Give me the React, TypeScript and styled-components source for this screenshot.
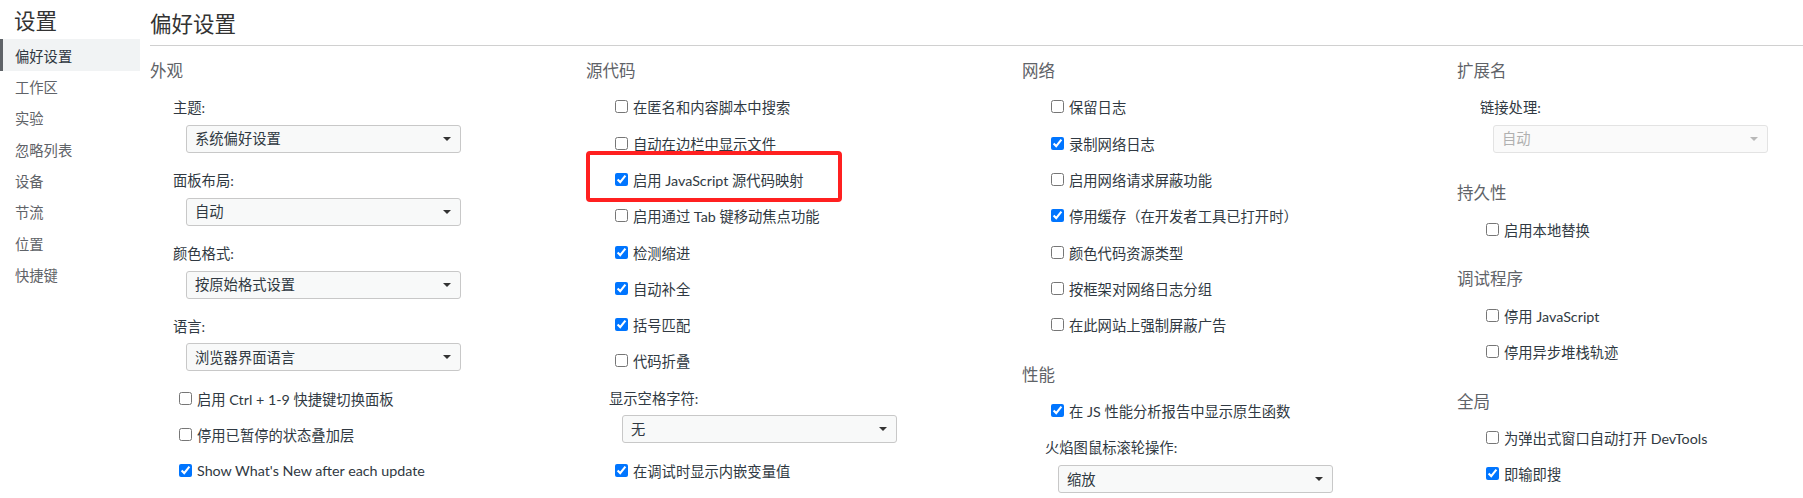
import React from "react";
import styled, { createGlobalStyle, css } from "styled-components";

const GlobalStyle = createGlobalStyle`
  html, body { margin: 0; padding: 0; background: #ffffff; }
  body {
    font-family: "Lato", "Noto Sans CJK SC", sans-serif;
    color: #303942;
    font-size: 14.3px;
  }
  * { box-sizing: border-box; }
`;

const Page = styled.div`
  display: flex;
  width: 1803px;
  height: 498px;
  overflow: hidden;
  background: #fff;
`;

const Sidebar = styled.nav`
  width: 140px;
  flex: none;
  display: flex;
  flex-direction: column;
`;

const SidebarTitle = styled.div`
  height: 39px;
  flex: none;
  padding-left: 14px;
  display: flex;
  align-items: center;
  font-size: 21.5px;
  color: #333;
  font-family: "Noto Sans CJK SC", sans-serif;
`;

const NavItem = styled.div<{ $active?: boolean }>`
  height: 31.3px;
  flex: none;
  display: flex;
  align-items: center;
  padding-left: 12px;
  font-size: 14.3px;
  color: #5f6368;
  font-family: "Noto Sans CJK SC", sans-serif;
  border-left: 3px solid transparent;
  ${(p) =>
    p.$active &&
    css`
      background: #f1f3f4;
      border-left-color: #5f6368;
      color: #303942;
      height: 32px;
    `}
`;

const Main = styled.main`
  flex: 1;
  padding-left: 10px;
  display: flex;
  flex-direction: column;
  min-height: 0;
`;

const Header = styled.div`
  height: 46px;
  flex: none;
  border-bottom: 1px solid #d0d0d0;
  display: flex;
  align-items: center;
  font-size: 21.5px;
  color: #333;
  font-family: "Noto Sans CJK SC", sans-serif;
  padding-bottom: 1px;
`;

const Columns = styled.div`
  flex: none;
  display: grid;
  grid-template-columns: 436px 436px 435px 1fr;
  padding-top: 5px;
`;

const Column = styled.div`
  position: relative;
  display: flex;
  flex-direction: column;
`;

const Section = styled.section`
  display: flex;
  flex-direction: column;
  & + & {
    margin-top: 12px;
  }
`;

const SectionTitle = styled.div`
  height: 37.7px;
  display: flex;
  align-items: center;
  font-size: 16.5px;
  color: #5f6368;
  font-family: "Noto Sans CJK SC", sans-serif;
`;

const FieldLabel = styled.div`
  height: 36.3px;
  flex: none;
  display: flex;
  align-items: center;
  padding-left: 23px;
  font-size: 14.3px;
  color: #303942;
`;

const CheckRow = styled.label`
  height: 36.3px;
  flex: none;
  display: flex;
  align-items: center;
  gap: 5px;
  padding-left: 29px;
  font-size: 14.3px;
  color: #303942;
  white-space: nowrap;
`;

const Box = styled.input.attrs({ type: "checkbox" })`
  width: 13px;
  height: 13px;
  margin: 0;
  flex: none;
  accent-color: #0075ff;
`;

const SelectWrap = styled.div<{ $disabled?: boolean }>`
  position: relative;
  flex: none;
  margin-left: 36px;
  margin-bottom: 8.5px;
  width: 275px;
  height: 28px;
  &::after {
    content: "";
    position: absolute;
    right: 10px;
    top: 12px;
    border-left: 4px solid transparent;
    border-right: 4px solid transparent;
    border-top: 4px solid ${(p) => (p.$disabled ? "#b8b8b8" : "#333")};
    pointer-events: none;
  }
`;

const Select = styled.select<{ $disabled?: boolean }>`
  appearance: none;
  -webkit-appearance: none;
  width: 100%;
  height: 100%;
  margin: 0;
  padding: 0 24px 0 8px;
  font: inherit;
  font-size: 14.3px;
  border-radius: 3px;
  border: 1px solid ${(p) => (p.$disabled ? "#e3e3e3" : "#c8c8c8")};
  background: ${(p) => (p.$disabled ? "#fafafa" : "#f8f9f9")};
  color: ${(p) => (p.$disabled ? "#b0b0b0" : "#303942")};
  opacity: 1;
`;

const Highlight = styled.div`
  position: absolute;
  left: 0;
  top: 100px;
  width: 256px;
  height: 51px;
  border: 4px solid #ff2020;
  border-radius: 4px;
  pointer-events: none;
`;

type Item =
  | { kind: "check"; text: string; checked?: boolean }
  | { kind: "select"; label: string; value: string; disabled?: boolean };

type SectionData = { title: string; items: Item[] };

const columns: SectionData[][] = [
  [
    {
      title: "外观",
      items: [
        { kind: "select", label: "主题:", value: "系统偏好设置" },
        { kind: "select", label: "面板布局:", value: "自动" },
        { kind: "select", label: "颜色格式:", value: "按原始格式设置" },
        { kind: "select", label: "语言:", value: "浏览器界面语言" },
        { kind: "check", text: "启用 Ctrl + 1-9 快捷键切换面板" },
        { kind: "check", text: "停用已暂停的状态叠加层" },
        { kind: "check", text: "Show What's New after each update", checked: true },
      ],
    },
  ],
  [
    {
      title: "源代码",
      items: [
        { kind: "check", text: "在匿名和内容脚本中搜索" },
        { kind: "check", text: "自动在边栏中显示文件" },
        { kind: "check", text: "启用 JavaScript 源代码映射", checked: true },
        { kind: "check", text: "启用通过 Tab 键移动焦点功能" },
        { kind: "check", text: "检测缩进", checked: true },
        { kind: "check", text: "自动补全", checked: true },
        { kind: "check", text: "括号匹配", checked: true },
        { kind: "check", text: "代码折叠" },
        { kind: "select", label: "显示空格字符:", value: "无" },
        { kind: "check", text: "在调试时显示内嵌变量值", checked: true },
      ],
    },
  ],
  [
    {
      title: "网络",
      items: [
        { kind: "check", text: "保留日志" },
        { kind: "check", text: "录制网络日志", checked: true },
        { kind: "check", text: "启用网络请求屏蔽功能" },
        { kind: "check", text: "停用缓存（在开发者工具已打开时）", checked: true },
        { kind: "check", text: "颜色代码资源类型" },
        { kind: "check", text: "按框架对网络日志分组" },
        { kind: "check", text: "在此网站上强制屏蔽广告" },
      ],
    },
    {
      title: "性能",
      items: [
        { kind: "check", text: "在 JS 性能分析报告中显示原生函数", checked: true },
        { kind: "select", label: "火焰图鼠标滚轮操作:", value: "缩放" },
      ],
    },
  ],
  [
    {
      title: "扩展名",
      items: [{ kind: "select", label: "链接处理:", value: "自动", disabled: true }],
    },
    { title: "持久性", items: [{ kind: "check", text: "启用本地替换" }] },
    {
      title: "调试程序",
      items: [
        { kind: "check", text: "停用 JavaScript" },
        { kind: "check", text: "停用异步堆栈轨迹" },
      ],
    },
    {
      title: "全局",
      items: [
        { kind: "check", text: "为弹出式窗口自动打开 DevTools" },
        { kind: "check", text: "即输即搜", checked: true },
      ],
    },
  ],
];

const navItems = ["偏好设置", "工作区", "实验", "忽略列表", "设备", "节流", "位置", "快捷键"];

function renderItem(item: Item, key: number) {
  if (item.kind === "check") {
    return (
      <CheckRow key={key}>
        <Box defaultChecked={!!item.checked} />
        <span>{item.text}</span>
      </CheckRow>
    );
  }
  return (
    <React.Fragment key={key}>
      <FieldLabel>{item.label}</FieldLabel>
      <SelectWrap $disabled={item.disabled}>
        <Select $disabled={item.disabled} disabled={item.disabled} defaultValue={item.value}>
          <option value={item.value}>{item.value}</option>
        </Select>
      </SelectWrap>
    </React.Fragment>
  );
}

export default function App() {
  return (
    <>
      <GlobalStyle />
      <Page>
        <Sidebar>
          <SidebarTitle>设置</SidebarTitle>
          {navItems.map((n, i) => (
            <NavItem key={n} $active={i === 0}>
              {n}
            </NavItem>
          ))}
        </Sidebar>
        <Main>
          <Header>偏好设置</Header>
          <Columns>
            {columns.map((col, ci) => (
              <Column key={ci}>
                {col.map((sec) => (
                  <Section key={sec.title}>
                    <SectionTitle>{sec.title}</SectionTitle>
                    {sec.items.map(renderItem)}
                  </Section>
                ))}
                {ci === 1 && <Highlight />}
              </Column>
            ))}
          </Columns>
        </Main>
      </Page>
    </>
  );
}
